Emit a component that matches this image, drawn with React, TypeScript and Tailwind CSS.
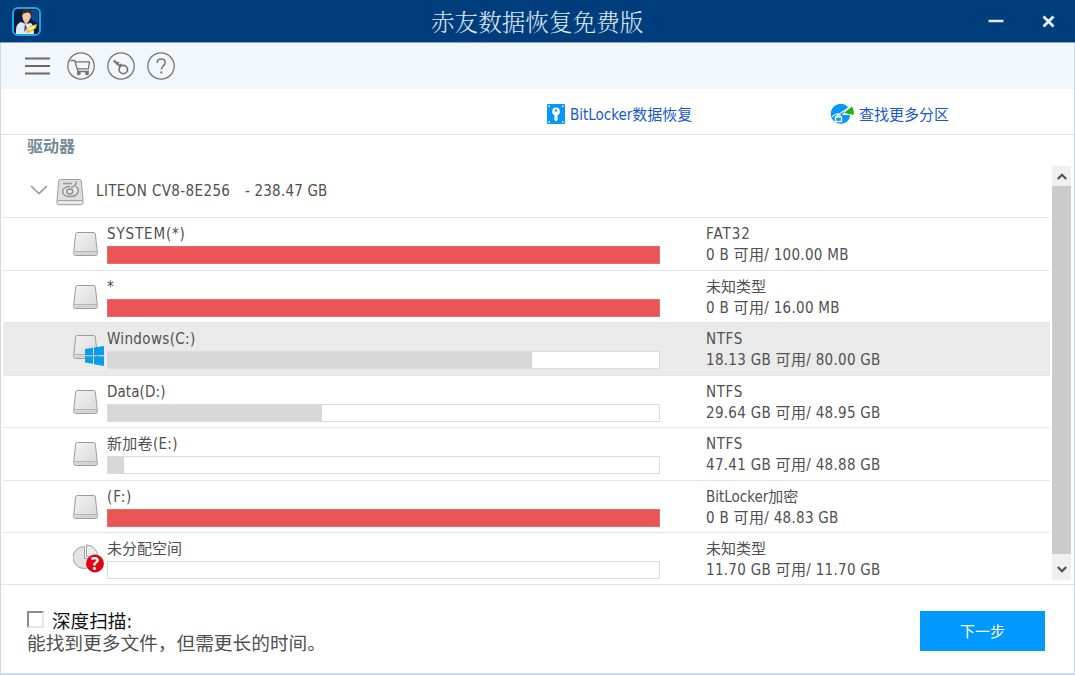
import { useState } from "react";

type IconKind = "disk" | "windows" | "unknown";

type Partition = {
  name: string;
  nameClass?: string;
  fs: string;
  fsClass?: string;
  space: string;
  used: number;
  full?: boolean;
  icon: IconKind;
};

const partitions: Partition[] = [
  { name: "SYSTEM(*)", nameClass: "tracking-[0.85px]", fs: "FAT32", fsClass: "tracking-[1px]", space: "0 B 可用/ 100.00 MB", used: 100, full: true, icon: "disk" },
  { name: "*", fs: "未知类型", space: "0 B 可用/ 16.00 MB", used: 100, full: true, icon: "disk" },
  { name: "Windows(C:)", nameClass: "tracking-[0.35px]", fs: "NTFS", fsClass: "tracking-[0.6px]", space: "18.13 GB 可用/ 80.00 GB", used: 77, icon: "windows" },
  { name: "Data(D:)", nameClass: "tracking-[0.1px]", fs: "NTFS", fsClass: "tracking-[0.6px]", space: "29.64 GB 可用/ 48.95 GB", used: 38.8, icon: "disk" },
  { name: "新加卷(E:)", nameClass: "tracking-[0.3px]", fs: "NTFS", fsClass: "tracking-[0.6px]", space: "47.41 GB 可用/ 48.88 GB", used: 2.9, icon: "disk" },
  { name: "(F:)", nameClass: "tracking-[0.9px]", fs: "BitLocker加密", space: "0 B 可用/ 48.83 GB", used: 100, full: true, icon: "disk" },
  { name: "未分配空间", fs: "未知类型", space: "11.70 GB 可用/ 11.70 GB", used: 0, icon: "unknown" },
];

function AppLogo() {
  return (
    <svg width="29" height="29" viewBox="0 0 29 29">
      <rect x="1" y="1" width="27" height="27" rx="5" fill="#061d42" stroke="#1ba4ea" strokeWidth="2" />
      <path d="M17 3h9v14l-6-4z" fill="#0c4a8c" />
      <path d="M4 27c0-6 0-10 5-12l5 2 5-1c2 2 3 6 3 11z" fill="#dceaf4" />
      <path d="M11 13l3 5 3-4v-3h-5z" fill="#e9b794" />
      <path d="M13 17l-1 8 3-4z" fill="#245078" />
      <ellipse cx="14.5" cy="9" rx="4.300" ry="5.200" fill="#f1c8a8" />
      <path d="M10 9c-1.500-5 1-7.500 5-7 4-.5 5.500 2.500 4.200 7-.7-2.500-1.700-3.500-4.200-3.500-2.500 1-4 .5-5 3.500z" fill="#402a20" />
      <path d="M14 23l4-4 7-2-1 4-6 4.500-4 .5z" fill="#f0bf38" />
      <path d="M16 21.500l7-3-1 2.500-5 2.500z" fill="#fff1a8" />
    </svg>
  );
}

function CartIcon() {
  return (
    <svg width="28" height="28" viewBox="0 0 28 28" fill="none" stroke="#747474" strokeWidth="1.300">
      <circle cx="14" cy="14" r="13.200" />
      <path d="M3.500 8.500h4.200l3.300 11h11M8.500 9.800h14l-1.200 7H10.500" />
      <circle cx="11.800" cy="21.300" r="1.300" fill="#747474" />
      <circle cx="20" cy="21.300" r="1.300" fill="#747474" />
    </svg>
  );
}

function KeyIcon() {
  return (
    <svg width="28" height="28" viewBox="0 0 28 28" fill="none" stroke="#747474" strokeWidth="1.700">
      <circle cx="14" cy="14" r="13.200" strokeWidth="1.300" />
      <circle cx="16.300" cy="17.500" r="4.200" />
      <path d="M13.500 14.500L7 8.800M9.300 12.500l2.600-2.300M11.600 14.500l2.800-2.600" />
      <path d="M6.800 8.500l4 3.500" strokeWidth="2.200" />
    </svg>
  );
}

function HelpIcon() {
  return (
    <svg width="28" height="28" viewBox="0 0 28 28" fill="none" stroke="#747474" strokeWidth="1.300">
      <circle cx="14" cy="14" r="13.200" />
      <path d="M10.200 11c0-2.500 1.600-4 4-4s4 1.500 4 3.600c0 3.200-3.900 3.400-3.900 7" strokeWidth="1.500" />
      <path d="M14.300 19.500v2" strokeWidth="2" />
    </svg>
  );
}

function BitLockerIcon() {
  return (
    <svg className="-mt-[3px]" width="18" height="20" viewBox="0 0 18 20">
      <rect width="18" height="20" rx="1" fill="#0797f8" />
      <circle cx="2.200" cy="2.200" r=".9" fill="#fff" />
      <circle cx="15.800" cy="2.200" r=".9" fill="#fff" />
      <circle cx="2.200" cy="17.800" r=".9" fill="#fff" />
      <circle cx="15.800" cy="17.800" r=".9" fill="#fff" />
      <path d="M9 3.500a4 4 0 0 0-1.600 7.600v4.700L9 17.400l1.600-1.600V11.100A4 4 0 0 0 9 3.500z" fill="#fff" />
      <circle cx="9" cy="6.500" r="1.200" fill="#0797f8" />
    </svg>
  );
}

function SearchPartitionIcon() {
  return (
    <svg className="-mt-[3px]" width="24" height="21" viewBox="0 0 24 21">
      <path d="M18 3A10 10 0 1 0 19.500 14.500L20 11H12z" fill="#0797f8" />
      <path d="M14 9L22 2.500c1.700 2.500 2 5.400 1.600 8.500z" fill="#1fb50c" />
      <path d="M2 13q3-3.500 8-3.500l8-5" stroke="#fff" strokeWidth="1.200" fill="none" />
      <rect x="5.500" y="13" width="6" height="4.500" fill="none" stroke="#fff" strokeWidth="1.400" />
      <path d="M7 12.500v-1q1.700-1.500 3.300 0v1" fill="none" stroke="#fff" strokeWidth="1.200" />
    </svg>
  );
}

function HardDriveIcon() {
  return (
    <svg width="28" height="28" viewBox="0 0 28 28">
      <path d="M4.500 1.500h19q1.500 0 1.800 1.500L27 22v3q0 1.700-1.700 1.700H2.700Q1 26.700 1 25v-3L2.700 3q.3-1.500 1.800-1.500z" fill="#dedede" stroke="#a0a0a0" />
      <path d="M1.500 22.500h25" stroke="#a5a5a5" />
      <path d="M3 24.500h22" stroke="#f4f4f4" strokeWidth="1.500" />
      <path d="M20 8.500c4 3 2.500 10-6 10-9.500 0-10-10 0-10" fill="#e8e8e8" stroke="#8e8e8e" strokeWidth="1.400" />
      <ellipse cx="13.800" cy="13.500" rx="3" ry="2.400" fill="none" stroke="#8e8e8e" strokeWidth="1.500" />
      <path d="M7 5.500h9M20.500 3.500c0 3-2 5-5.500 6" stroke="#999" strokeWidth="1.500" fill="none" />
    </svg>
  );
}

function DiskShape() {
  return (
    <svg width="25" height="26" viewBox="0 0 25 26">
      <defs>
        <linearGradient id="diskFace" x1="0" y1="0" x2="1" y2="1">
          <stop offset="0" stopColor="#f4f4f4" />
          <stop offset="1" stopColor="#d7d7d7" />
        </linearGradient>
      </defs>
      <path d="M4.300 1.500h16.400q1.300 0 1.600 1.300L24.200 20v2.800q0 1.700-1.700 1.700h-20Q.8 24.500.8 22.800V20L2.700 2.800Q3 1.500 4.300 1.500z" fill="url(#diskFace)" stroke="#9c9c9c" />
      <path d="M1.300 20.500h22.400" stroke="#b5b5b5" />
      <path d="M2.500 22.500h20" stroke="#cfcfcf" strokeWidth="2" />
    </svg>
  );
}

function PartitionIcon({ kind }: { kind: IconKind }) {
  if (kind === "unknown") {
    return (
      <svg className="mt-[11px]" width="31" height="29" viewBox="0 0 31 29">
        <path d="M11.500 2.500A11 11 0 1 0 22 14.500H11.500z" fill="#e3e3e3" stroke="#a0a0a0" />
        <path d="M13.500 1a11 11 0 0 1 11 11.500h-11z" fill="#ececec" stroke="#a0a0a0" />
        <circle cx="22" cy="19.500" r="8.900" fill="#e3000f" />
        <text x="22" y="25.500" textAnchor="middle" fill="#fff" className="font-['Open_Sans',sans-serif] text-[17px] font-bold">?</text>
      </svg>
    );
  }
  return (
    <div className={`relative h-[26px] ${kind === "windows" ? "mt-[11px]" : "mt-[13px]"}`}>
      <DiskShape />
      {kind === "windows" && (
        <svg className="absolute left-[12px] top-[12px]" width="19" height="20" viewBox="0 0 19 20" fill="#0b9cea">
          <path d="M0 3l8-1.200v7.500H0zM9 1.600L19 0v9.300H9zM0 10.300h8v7.500l-8-1.200zM9 10.300h10V20L9 18.200z" />
        </svg>
      )}
    </div>
  );
}

function PartitionRow({ item, selected, onSelect }: { item: Partition; selected: boolean; onSelect: () => void }) {
  return (
    <div
      onClick={onSelect}
      className={`ml-0.5 flex h-[52.5px] w-[1047px] border-b border-[#e6e6e6] pl-[70px] ${selected ? "bg-[#eaeaea]" : ""}`}
    >
      <div className="w-[34px] shrink-0">
        <PartitionIcon kind={item.icon} />
      </div>
      <div className="w-[553px] shrink-0">
        <div className={`mt-[5px] h-[22px] whitespace-nowrap leading-[22px] ${item.nameClass ?? ""}`}>{item.name}</div>
        <div className={`mt-px h-[18px] border ${item.full ? "border-[#ed6b6a] bg-[#e95555]" : "border-[#dcdcdc] bg-white"}`}>
          {!item.full && <div className="h-full bg-[#d7d7d7]" style={{ width: `${item.used}%` }} />}
        </div>
      </div>
      <div className="ml-[46px] mt-[5px] whitespace-nowrap">
        <div className={`h-[21px] leading-[22px] ${item.fsClass ?? ""}`}>{item.fs}</div>
        <div className="leading-[22px] tracking-[0.3px]">{item.space}</div>
      </div>
    </div>
  );
}

export default function App() {
  const [selected, setSelected] = useState(2);
  const [deepScan, setDeepScan] = useState(false);

  return (
    <div className="flex h-[675px] w-[1075px] flex-col overflow-hidden bg-white font-['DejaVu_Sans_Condensed','DejaVu_Sans','Noto_Sans_CJK_SC',sans-serif] text-[15px] text-[#505050]">
      {/* title bar */}
      <header className="flex h-[43px] shrink-0 items-center border-b border-[#7fa3c9] bg-[#003d7c] pl-3">
        <AppLogo />
        <h1 className="ml-[390px] w-[213px] whitespace-nowrap font-['Noto_Serif_CJK_SC','Noto_Sans_CJK_SC',serif] text-[23.600px] font-light leading-[43px] text-[#dce8f4]">赤友数据恢复免费版</h1>
        <svg className="ml-[344px]" width="16" height="16" viewBox="0 0 16 16">
          <path d="M.5 8h15" stroke="#dfe8f0" strokeWidth="2.500" />
        </svg>
        <svg className="ml-[38px]" width="13" height="13" viewBox="0 0 13 13">
          <path d="M1.500 1.500l10 10m0-10l-10 10" stroke="#e8eff5" strokeWidth="2.800" />
        </svg>
      </header>

      <div className="flex min-h-0 flex-1 flex-col border-b-2 border-l border-r border-[#cbd9eb]">
        {/* toolbar */}
        <div className="flex h-[46px] shrink-0 items-center bg-[#f2f7fc] pl-6">
          <svg className="mr-[17px]" width="25" height="18" viewBox="0 0 25 18" stroke="#6c6868" strokeWidth="2.200">
            <path d="M0 1.500h25M0 9h25M0 16.500h25" />
          </svg>
          <div className="flex gap-3">
            <CartIcon />
            <KeyIcon />
            <HelpIcon />
          </div>
        </div>

        {/* links */}
        <div className="flex h-[46px] shrink-0 items-center border-b border-[#e4e4e4] pl-[546px] pt-2 text-[#1557d6]">
          <a className="flex w-[283px] items-center gap-[5px] whitespace-nowrap">
            <BitLockerIcon />
            BitLocker数据恢复
          </a>
          <a className="flex items-center gap-[5px] whitespace-nowrap">
            <SearchPartitionIcon />
            查找更多分区
          </a>
        </div>

        <div className="h-[31px] shrink-0 pl-[26px] text-[16px] font-bold leading-[24px] text-[#728b98]">驱动器</div>

        {/* drive list */}
        <div className="flex h-[419px] shrink-0 border-b border-[#e4e4e4]">
          <div className="w-[1051px] overflow-hidden">
            <div className="ml-0.5 flex h-[52px] w-[1047px] items-center border-b border-[#e6e6e6] pl-[27px]">
              <svg className="-mt-[3px]" width="18" height="10" viewBox="0 0 18 10" fill="none" stroke="#999" strokeWidth="1.700">
                <path d="M1 1l8 7.500L17 1" />
              </svg>
              <div className="ml-[8px]"><HardDriveIcon /></div>
              <span className="ml-[12px] w-[149px] whitespace-nowrap tracking-[0.38px]">LITEON CV8-8E256</span>
              <span className="whitespace-nowrap tracking-[0.2px]">- 238.47 GB</span>
            </div>
            {partitions.map((item, i) => (
              <PartitionRow key={i} item={item} selected={selected === i} onSelect={() => setSelected(i)} />
            ))}
          </div>
          <div className="flex h-[414px] w-[19px] flex-col bg-[#f0f0f0]">
            <div className="flex h-[20px] items-center justify-center">
              <svg width="10" height="7" viewBox="0 0 10 7" fill="none" stroke="#505050" strokeWidth="2.200">
                <path d="M.8 6L5 1.800 9.200 6" />
              </svg>
            </div>
            <div className="h-[368px] bg-[#cbcbcb]" />
            <div className="flex flex-1 items-center justify-center pt-1">
              <svg width="10" height="7" viewBox="0 0 10 7" fill="none" stroke="#505050" strokeWidth="2.200">
                <path d="M.8 1L5 5.200 9.200 1" />
              </svg>
            </div>
          </div>
        </div>

        {/* footer */}
        <footer className="flex flex-1 items-start justify-between pl-[26px] pr-[29px] pt-[26px]">
          <div>
            <label className="flex h-[20px] items-center gap-2 text-[18.600px] leading-[20px] text-[#111]">
              <input
                type="checkbox"
                checked={deepScan}
                onChange={(e) => setDeepScan(e.target.checked)}
                className="-mt-[3px] h-[17px] w-[17px] appearance-none border-2 border-b-[#e6e6e6] border-l-[#8c8c8c] border-r-[#e6e6e6] border-t-[#8c8c8c] bg-white checked:bg-[#0099ff]"
              />
              <span className="pt-px">深度扫描:</span>
            </label>
            <p className="mt-px whitespace-nowrap text-[18.700px] leading-[24px]">能找到更多文件，但需更长的时间。</p>
          </div>
          <button className="h-[40px] w-[125px] bg-[#0099ff] pt-[3px] text-[15px] text-white">下一步</button>
        </footer>
      </div>
    </div>
  );
}
